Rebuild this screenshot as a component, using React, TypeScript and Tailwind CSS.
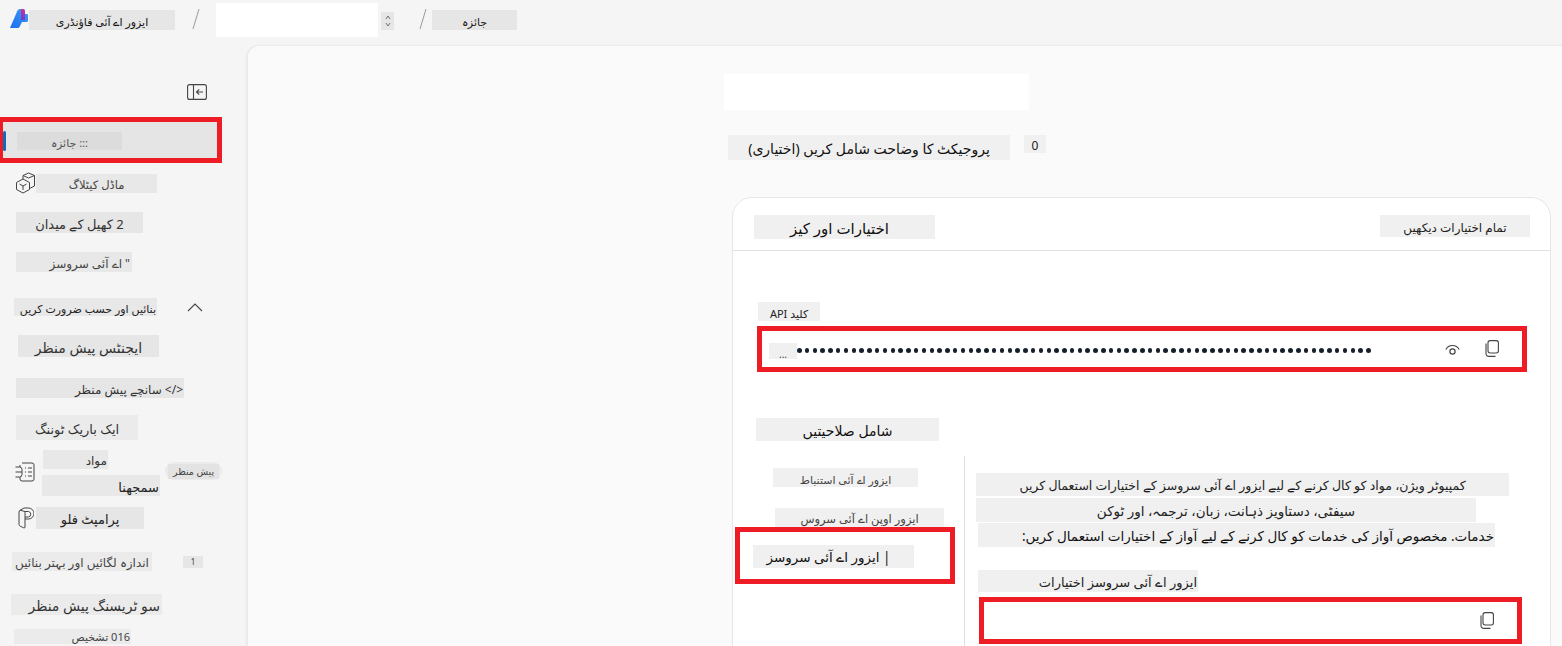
import React from "react";

const FONT = "font-['Noto_Sans','DejaVu_Sans',sans-serif]";

function Patch({ cls, end, children }: { cls: string; end?: boolean; children?: React.ReactNode }) {
  return (
    <div
      dir="rtl"
      className={`flex shrink-0 items-center whitespace-nowrap pt-[3px] leading-none ${end ? "justify-start" : "justify-center"} ${cls}`}
    >
      {children}
    </div>
  );
}

function CopyIcon({ cls }: { cls: string }) {
  return (
    <svg className={cls} viewBox="0 0 14 17" fill="none" stroke="#444" strokeWidth="1.1">
      <rect x="3" y="0.6" width="10.4" height="12.4" rx="2.2" />
      <path d="M1 3.5v9.7a3.2 3.2 0 0 0 3.2 3.2h6.3" />
    </svg>
  );
}

function Sidebar() {
  return (
    <aside className="h-[601px] w-[247px] shrink-0 overflow-hidden">
      <div className="flex justify-end pr-[40px] pt-[39px]">
        <svg className="h-[16px] w-[20px]" viewBox="0 0 20 16" fill="none" stroke="#444" strokeWidth="1.1">
          <rect x="0.6" y="0.6" width="18.8" height="14.8" rx="2" />
          <path d="M6.5 0.6v14.8M16 8H9.5M12.2 5.3L9.5 8l2.7 2.7" />
        </svg>
      </div>
      <div className="relative mt-[17px] flex h-[46px] w-[222px] items-center border-[5px] border-l-[3px] border-[#ee1c25] bg-[#e5e5e5]">
        <span className="absolute left-0 top-[9px] h-[20px] w-[3px] rounded bg-[#0f6cbd]" />
        <Patch cls="ml-[14px] mt-px h-[18px] w-[105px] bg-[#dcdcdc] text-[11px] text-[#555]">::: جائزہ</Patch>
      </div>
      <div className="mt-[9px] flex h-[22px] items-center pl-[15px]">
        <svg className="h-[22px] w-[21px]" viewBox="0 0 21 22" fill="none" stroke="#444" strokeWidth="1">
          <path d="M8 7l6.5 3.5v7L8 21l-6.5-3.5v-7z" />
          <path d="M4.5 12L8 14l3.5-2M8 14v4" />
          <path d="M8 7V3.5L13.5 1 19.5 3.5v10.5l-5 2.5" />
          <path d="M8 3.5l5.5 2.5 6-2.5" />
        </svg>
        <Patch cls="w-[121px] h-[19px] bg-[#e8e8e8] text-[11.5px] text-[#444]">ماڈل کیٹلاگ</Patch>
      </div>
      <Patch cls="ml-[16px] mt-[18px] h-[21px] w-[127px] bg-[#e6e6e6] text-[13px] text-[#333]">2 کھیل کے میدان</Patch>
      <Patch end cls="ml-[16px] mt-[19px] h-[20px] w-[116px] bg-[#e8e8e8] pr-[2px] text-[12px] text-[#444]">" اے آئی سروسز</Patch>
      <div className="mt-[26px] flex h-[18px] items-center pl-[14px]">
        <Patch end cls="h-[18px] w-[143px] bg-[#e8e8e8] pr-px text-[11px] text-[#222]">بنائیں اور حسب ضرورت کریں</Patch>
        <svg className="ml-[30px] h-[9px] w-[16px]" viewBox="0 0 16 9" fill="none" stroke="#444" strokeWidth="1.1">
          <path d="M1 8l7-7 7 7" />
        </svg>
      </div>
      <Patch cls="ml-[18px] mt-[19px] h-[22px] w-[141px] bg-[#e6e6e6] text-[14px] text-[#333]">ایجنٹس پیش منظر</Patch>
      <Patch end cls="ml-[16px] mt-[21px] h-[20px] w-[168px] bg-[#e6e6e6] pr-px text-[12px] text-[#333]">{"</> سانچے پیش منظر"}</Patch>
      <Patch cls="ml-[16px] mt-[17px] h-[25px] w-[122px] bg-[#ebebeb] text-[13px] text-[#333]">ایک باریک ٹوننگ</Patch>
      <div className="mt-[10px] flex h-[46px]">
        <svg className="ml-[15px] mt-[12px] h-[20px] w-[20px] shrink-0" viewBox="0 0 20 20" fill="none" stroke="#444" strokeWidth="1">
          <path d="M7 1h10a2 2 0 0 1 2 2v14a2 2 0 0 1-2 2H7a2 2 0 0 1-2-2v-2" />
          <path d="M0.5 5h4a2.5 2.5 0 0 1 2.5 2.5v5A2.5 2.5 0 0 1 4.5 15h-4M0.5 10H7M10 6h1M13 6h4M10 10h1M13 10h4M10 14h1M13 14h4M5 5V3" />
        </svg>
        <div className="ml-[7px] flex flex-col">
          <Patch end cls="ml-px h-[19px] w-[65px] bg-[#e8e8e8] pr-px text-[12px] text-[#333]">مواد</Patch>
          <Patch end cls="mt-[6px] h-[21px] w-[118px] bg-[#e8e8e8] pr-px text-[13px] text-[#222]">سمجھنا</Patch>
        </div>
        <div className="ml-[5px] mt-[12px] flex h-[18px] w-[57px] shrink-0 items-center justify-center rounded-full bg-[#ebebeb]">
          <Patch cls="h-[15px] w-[51px] bg-[#e3e3e3] pt-px text-[9.5px] text-[#444]">پیش منظر</Patch>
        </div>
      </div>
      <div className="mt-[11px] flex h-[22px] items-center pl-[18px]">
        <svg className="h-[22px] w-[16px] shrink-0" viewBox="0 0 16 22" fill="none" stroke="#444" strokeWidth="1">
          <path d="M1 5c0-1 .5-1.6 1.4-2L6 1h4.5a5 5 0 0 1 0 11H7v8a.9.9 0 0 1-1.3.8l-3.4-1.6c-.8-.4-1.3-1-1.3-1.9z" />
          <path d="M7 12V4.5L2 3.2M7 4.5h3.5a2.8 2.8 0 0 1 0 5.5H7" />
        </svg>
        <Patch cls="ml-[2px] h-[22px] w-[108px] bg-[#e6e6e6] text-[13px] text-[#222]">پرامپٹ فلو</Patch>
      </div>
      <div className="mt-[23px] flex h-[19px] items-center pl-[12px]">
        <Patch cls="h-[19px] w-[140px] bg-[#ebebeb] text-[12px] text-[#444]">اندازہ لگائیں اور بہتر بنائیں</Patch>
        <Patch cls="ml-[31px] h-[12px] w-[20px] bg-[#e6e6e6] pt-px text-[8px] text-[#444]">1</Patch>
      </div>
      <Patch end cls="ml-[11px] mt-[23px] h-[21px] w-[151px] bg-[#ebebeb] pr-[2px] text-[14px] text-[#333]">سو ٹریسنگ پیش منظر</Patch>
      <Patch end cls="ml-[14px] mt-[14px] h-[15px] w-[117px] bg-[#ebebeb] pr-px !pt-0 text-[11px] text-[#444]">016 تشخیص</Patch>
    </aside>
  );
}

function Main() {
  return (
    <main className="h-[601px] min-w-0 flex-1 overflow-hidden rounded-tl-[12px] border-l border-t border-[#ebebeb] bg-[#fafafa] pl-[476px] pt-[28px] shadow-sm">
      <div className="h-[36px] w-[305px] bg-white" />
      <div className="mt-[25px] flex items-start pl-[4px]">
        <Patch cls="h-[25px] w-[282px] bg-[#f0f0f0] text-[14px] text-[#111]">پروجیکٹ کا وضاحت شامل کریں (اختیاری)</Patch>
        <Patch cls="ml-[14px] h-[18px] w-[22px] bg-[#f0f0f0] text-[12px] text-[#222]">0</Patch>
      </div>
      <section className="ml-[8px] mt-[37px] h-[470px] w-[819px] rounded-t-[20px] border border-[#e6e6e6] bg-white">
        <div className="flex h-[53px] justify-between border-b border-[#e0e0e0] pl-[21px] pr-[20px] pt-[17px]">
          <Patch cls="h-[24px] w-[181px] bg-[#f0f0f0] pr-[10px] text-[15px] text-[#111]">اختیارات اور کیز</Patch>
          <Patch cls="h-[22px] w-[150px] bg-[#f0f0f0] text-[12px] text-[#222]">تمام اختیارات دیکھیں</Patch>
        </div>
        <Patch cls="ml-[25px] mt-[51px] h-[19px] w-[62px] bg-[#f0f0f0] text-[11px] text-[#222]">کلید API</Patch>
        <div className="ml-[24px] mt-[5px] flex h-[46px] w-[770px] items-center border-[5px] border-[#ee1c25] bg-white pl-[7px]">
          <div className="mt-[3px] flex h-[16px] w-[28px] items-end justify-center bg-[#f0f0f0] text-[10px] leading-none text-[#444]">...</div>
          <div className="mt-[3px] flex w-[574px] justify-between">
            {Array.from({ length: 74 }).map((_, i) => (
              <span key={i} className="h-[4.5px] w-[4.5px] rounded-full bg-[#16202c]" />
            ))}
          </div>
          <svg className="ml-[74px] h-[13px] w-[15px]" viewBox="0 0 15 13" fill="none" stroke="#444" strokeWidth="1.2">
            <path d="M0.8 6.5a7.6 7.6 0 0 1 13.4 0" />
            <circle cx="7.5" cy="8.5" r="2.6" />
          </svg>
          <CopyIcon cls="ml-[25px] mt-[-1px] h-[17px] w-[14px]" />
        </div>
        <Patch cls="ml-[23px] mt-[46px] h-[23px] w-[183px] bg-[#f0f0f0] text-[14px] text-[#111]">شامل صلاحیتیں</Patch>
        <div className="mt-[15px] flex">
          <div className="ml-[2px] w-[229px] shrink-0">
            <Patch cls="ml-[38px] mt-[12px] h-[19px] w-[145px] bg-[#f0f0f0] text-[11px] text-[#444]">ایزور اے آئی استنباط</Patch>
            <Patch cls="ml-[40px] mt-[21px] h-[19px] w-[169px] bg-[#f0f0f0] text-[11.5px] text-[#444]">ایزور اوپن اے آئی سروس</Patch>
            <div className="h-[57px] w-[220px] border-[5px] border-[#ee1c25] bg-white pl-[13px] pt-[13px]">
              <Patch cls="h-[23px] w-[161px] bg-[#f0f0f0] pr-[10px] text-[13.5px] text-[#111]">| ایزور اے آئی سروسز</Patch>
            </div>
          </div>
          <div className="h-[200px] border-l border-[#e0e0e0] pl-[11px] pt-[17px]">
            <Patch cls="h-[23px] w-[533px] bg-[#f0f0f0] text-[12.5px] text-[#222]">کمپیوٹر ویژن، مواد کو کال کرنے کے لیے ایزور اے آئی سروسز کے اختیارات استعمال کریں</Patch>
            <Patch cls="mt-[2px] h-[24px] w-[500px] bg-[#f0f0f0] text-[13.5px] text-[#222]">سیفٹی، دستاویز ذہانت، زبان، ترجمہ، اور ٹوکن</Patch>
            <Patch end cls="ml-[2px] mt-px h-[24px] w-[517px] bg-[#f0f0f0] pr-px text-[13.5px] text-[#111]">خدمات. مخصوص آواز کی خدمات کو کال کرنے کے لیے آواز کے اختیارات استعمال کریں:</Patch>
            <Patch end cls="ml-[2px] mt-[23px] h-[22px] w-[220px] bg-[#f0f0f0] pr-px text-[13px] text-[#222]">ایزور اے آئی سروسز اختیارات</Patch>
            <div className="ml-[3px] mt-[5px] flex h-[47px] w-[543px] items-center justify-end border-[5px] border-[#ee1c25] bg-white pr-[23px]">
              <CopyIcon cls="h-[17px] w-[14px]" />
            </div>
          </div>
        </div>
      </section>
    </main>
  );
}

export default function App() {
  return (
    <div className={`h-[646px] w-[1562px] overflow-hidden bg-[#f5f5f5] ${FONT}`}>
      <header className="flex h-[45px] items-start">
        <svg className="ml-[10px] mt-[9px] h-[19px] w-[18px] shrink-0" viewBox="0 0 18 19">
          <defs>
            <linearGradient id="lg1" x1="0" y1="1" x2="1" y2="0">
              <stop offset="0" stopColor="#1a6ff0" />
              <stop offset="1" stopColor="#3d9bf5" />
            </linearGradient>
            <linearGradient id="lg2" x1="0" y1="0" x2="0" y2="1">
              <stop offset="0" stopColor="#d42c9a" />
              <stop offset="1" stopColor="#6a3fd0" />
            </linearGradient>
          </defs>
          <path d="M0 19L7.5 1.5Q8.2 0 10 0H13Q15 0 15 3V5H17Q18 5 18 6V12Q18 13 16 13H12L9.5 18Q9 19 8 19Z" fill="url(#lg1)" />
          <path d="M11 0H13Q15 0 15 3V11H11Z" fill="url(#lg2)" />
        </svg>
        <Patch cls="ml-px mt-[10px] h-[20px] w-[146px] bg-[#e6e6e6] text-[11px] text-[#111]">ایزور اے آئی فاؤنڈری</Patch>
        <svg className="ml-[17px] mt-[9px] h-[20px] w-[8px] shrink-0" viewBox="0 0 8 20" stroke="#999"><path d="M7 0L1 20" /></svg>
        <div className="ml-[16px] mt-[3px] h-[34px] w-[162px] bg-white" />
        <div className="ml-[3px] mt-[12px] flex h-[18px] w-[13px] flex-col items-center justify-center bg-[#e6e6e6]">
          <svg className="h-[12px] w-[6px]" viewBox="0 0 6 12" fill="none" stroke="#555" strokeWidth="0.8"><path d="M1 4l2-3 2 3M1 8l2 3 2-3" /></svg>
        </div>
        <svg className="ml-[25px] mt-[9px] h-[20px] w-[8px] shrink-0" viewBox="0 0 8 20" stroke="#999"><path d="M7 0L1 20" /></svg>
        <Patch cls="ml-[5px] mt-[10px] h-[20px] w-[85px] bg-[#e6e6e6] text-[11px] text-[#222]">جائزہ</Patch>
      </header>
      <div className="flex">
        <Sidebar />
        <Main />
      </div>
    </div>
  );
}
